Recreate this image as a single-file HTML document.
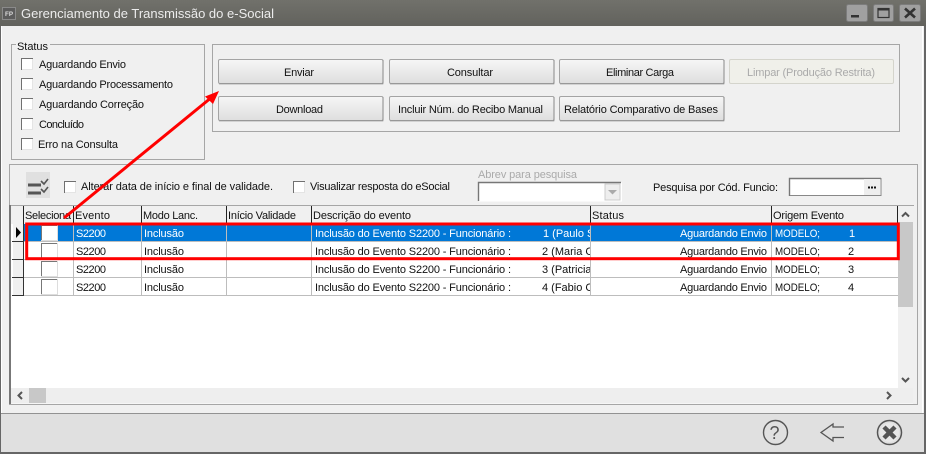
<!DOCTYPE html>
<html><head><meta charset="utf-8"><title>Gerenciamento de Transmissão do e-Social</title>
<style>
html,body{margin:0;padding:0;width:926px;height:454px;overflow:hidden;background:#666}
svg{display:block;position:absolute;left:0;top:0}
text{font-family:"Liberation Sans",sans-serif;font-size:11px;fill:#111;white-space:pre}
.t{font-size:13px;fill:#ececec}
.g{fill:#aaa}
.w{fill:#fff}
.m{font-size:11px}
</style></head><body>
<svg width="926" height="454" viewBox="0 0 926 454" xmlns="http://www.w3.org/2000/svg">
<defs>
<linearGradient id="tb" x1="0" y1="0" x2="0" y2="1"><stop offset="0" stop-color="#71716b"/><stop offset="1" stop-color="#62625d"/></linearGradient>
<linearGradient id="bt" x1="0" y1="0" x2="0" y2="1"><stop offset="0" stop-color="#f6f6f6"/><stop offset="1" stop-color="#dedede"/></linearGradient>
<g id="btn"><rect x="0.5" y="0.5" width="164.5" height="24" rx="1.5" fill="url(#bt)" stroke="#a4a4a4"/><path d="M1 25H165V1" fill="none" stroke="#777" stroke-width="0.6"/></g>
<g id="cb"><rect x="0.5" y="0.5" width="11" height="11" fill="#fff" stroke="#e4e4e4"/><path d="M0.5 12V0.5H12" fill="none" stroke="#707070"/></g>
<g id="cg"><rect x="0" y="0" width="16" height="15" fill="#fff"/><path d="M0.5 15V0.5H16" fill="none" stroke="#777"/><path d="M0 15.5H16.5V0" fill="none" stroke="#ddd"/></g>
<g id="ind"><rect x="0" y="0" width="12" height="17" fill="#f0f0f0"/><path d="M0 17.5H12M11.5 0V18" stroke="#333" fill="none"/><path d="M0.5 0V17" stroke="#fff"/></g>
</defs>

<!-- window -->
<rect x="0" y="0" width="926" height="454" fill="#666"/>
<rect x="1" y="26" width="923" height="426" fill="#f0f0f0"/>
<rect x="1" y="26" width="1" height="387" fill="#fff"/>
<rect x="922" y="26" width="1" height="387" fill="#fff"/>
<rect x="0" y="0" width="926" height="26" fill="url(#tb)"/>
<rect x="1" y="413" width="923" height="1" fill="#929292"/>
<rect x="1" y="414" width="923" height="38" fill="#e0e0e0"/>

<!-- title -->
<rect x="2.5" y="7.5" width="13" height="12" fill="#5c5c5c" stroke="#8a8a8a"/>
<text x="5" y="16" style="font-size:6.5px;font-weight:bold;fill:#ddd" textLength="8" lengthAdjust="spacingAndGlyphs">FP</text>
<text class="t" x="21" y="18" textLength="253" lengthAdjust="spacingAndGlyphs">Gerenciamento de Transmissão do e-Social</text>
<g fill="#a0a0a0" stroke="#7c7c7c">
<rect x="846.5" y="4.5" width="21" height="17" rx="2"/>
<rect x="873.5" y="4.5" width="20" height="17" rx="2"/>
<rect x="899.5" y="4.5" width="21" height="17" rx="2"/>
</g>
<rect x="851" y="15" width="8" height="2.5" fill="#333"/>
<rect x="878" y="8.5" width="11" height="9" fill="none" stroke="#333" stroke-width="1.2"/><rect x="878" y="8" width="11" height="2.5" fill="#333"/>
<path d="M905 8.5L915 17.5M915 8.5L905 17.5" stroke="#333" stroke-width="2.6"/>

<!-- status group -->
<rect x="11.5" y="44.5" width="193" height="115" fill="none" stroke="#a6a6a6"/>
<rect x="16" y="42" width="34" height="6" fill="#f0f0f0"/>
<text x="17" y="50" textLength="31">Status</text>
<use href="#cb" x="21" y="58"/><text x="39" y="68" textLength="87">Aguardando Envio</text>
<use href="#cb" x="21" y="78"/><text x="39" y="88" textLength="134">Aguardando Processamento</text>
<use href="#cb" x="21" y="98"/><text x="39" y="108" textLength="105">Aguardando Correção</text>
<use href="#cb" x="21" y="118"/><text x="39" y="128" textLength="45">Concluído</text>
<use href="#cb" x="21" y="138"/><text x="38" y="148" textLength="80">Erro na Consulta</text>

<!-- button group -->
<rect x="212.5" y="44.5" width="687" height="87" fill="none" stroke="#a6a6a6"/>
<use href="#btn" x="218" y="59"/><text x="284" y="76" textLength="30">Enviar</text>
<use href="#btn" x="389" y="59"/><text x="447" y="76" textLength="46">Consultar</text>
<use href="#btn" x="559" y="59"/><text x="606" y="76" textLength="68">Eliminar Carga</text>
<rect x="729.5" y="59.5" width="164" height="24" rx="1.5" fill="#f0f0ea" stroke="#d4d4cc"/>
<text class="g" x="747" y="76" textLength="128">Limpar (Produção Restrita)</text>
<use href="#btn" x="218" y="96"/><text x="276" y="113" textLength="47">Download</text>
<use href="#btn" x="389" y="96"/><text x="398" y="113" textLength="145">Incluir Núm. do Recibo Manual</text>
<use href="#btn" x="559" y="96"/><text x="564" y="113" textLength="154">Relatório Comparativo de Bases</text>

<!-- lower panel -->
<rect x="9.5" y="164.5" width="908" height="240" fill="none" stroke="#a6a6a6"/>
<rect x="26" y="172" width="24" height="26" fill="#e0e0e0"/>
<path d="M28 185H41M28 193H41" stroke="#555" stroke-width="3"/>
<path d="M41 181L44 184L48 179M41 189L44 192L48 187" stroke="#555" stroke-width="1.6" fill="none"/>
<use href="#cb" x="64" y="181"/><text x="81" y="190" textLength="192">Alterar data de início e final de validade.</text>
<use href="#cb" x="293" y="181"/><text x="310" y="190" textLength="140">Visualizar resposta do eSocial</text>
<text x="478" y="178" class="g" textLength="99">Abrev para pesquisa</text>
<rect x="479" y="182.5" width="143" height="19" fill="#fff"/>
<path d="M478.5 201V182.5H621" fill="none" stroke="#777" stroke-width="1.4"/>
<rect x="605" y="184" width="15" height="16" fill="#eee" stroke="#ccc"/><path d="M608 190H617L612.5 194.5Z" fill="#aaa"/>
<text x="653" y="191" textLength="125">Pesquisa por Cód. Funcio:</text>
<rect x="789" y="178" width="92" height="18" fill="#fff"/>
<path d="M789.5 196V178.5H881" fill="none" stroke="#777" stroke-width="1.4"/>
<path d="M790 195.5H881V178" fill="none" stroke="#888"/>
<rect x="864" y="179" width="16" height="16" fill="#eee"/>
<path d="M868 187.5h2M871 187.5h2M874 187.5h2" stroke="#111" stroke-width="2"/>

<!-- grid -->
<rect x="11" y="205" width="902" height="199" fill="#fff"/>
<rect x="9" y="205" width="2" height="199" fill="#777"/>
<rect x="11" y="205" width="903" height="1" fill="#a6a6a6"/>
<rect x="11" y="206" width="887" height="18" fill="#f0f0f0"/>
<path d="M23.5 206V224M73.5 206V224M141.5 206V224M226.5 206V224M311.5 206V224M590.5 206V224M771.5 206V224M897.5 206V224" stroke="#222"/>
<rect x="23" y="224" width="875" height="18" fill="#0078d7"/>
<path d="M24 241.5H898M24 259.5H898M24 277.5H898M24 295.5H898" stroke="#bdbdbd"/>
<path d="M73.5 224V296M141.5 224V296M226.5 224V296M311.5 224V296M590.5 224V296M771.5 224V296" stroke="#bdbdbd"/>
<use href="#ind" x="12" y="224"/><use href="#ind" x="12" y="242"/><use href="#ind" x="12" y="260"/><use href="#ind" x="12" y="278"/>
<path d="M16 227L21 232.5L16 238Z" fill="#000"/>
<use href="#cg" x="41" y="225"/><use href="#cg" x="41" y="243"/><use href="#cg" x="41" y="261"/><use href="#cg" x="41" y="279"/>

<text x="25" y="219" textLength="46">Seleciona</text>
<text x="75" y="219" textLength="35">Evento</text>
<text x="143" y="219" textLength="55">Modo Lanc.</text>
<text x="228" y="219" textLength="68">Início Validade</text>
<text x="313" y="219" textLength="98">Descrição do evento</text>
<text x="592" y="219" textLength="32">Status</text>
<text x="773" y="219" textLength="71">Origem Evento</text>

<text class="w" x="76" y="237" textLength="30">S2200</text><text class="w" x="144" y="237" textLength="40">Inclusão</text><text class="w" x="315" y="237" textLength="196">Inclusão do Evento S2200 - Funcionário :</text>
<svg x="543" y="225" width="47" height="16"><text class="w" x="0" y="12">1 (Paulo Santos</text></svg>
<text class="w" x="680" y="237" textLength="87">Aguardando Envio</text><text class="w m" x="775" y="237" textLength="45" lengthAdjust="spacingAndGlyphs">MODELO;</text><text class="w" x="849" y="237">1</text>

<text x="76" y="255" textLength="30">S2200</text><text x="144" y="255" textLength="40">Inclusão</text><text x="315" y="255" textLength="196">Inclusão do Evento S2200 - Funcionário :</text>
<svg x="542" y="243" width="48" height="16"><text x="0" y="12">2 (Maria Costa</text></svg>
<text x="680" y="255" textLength="87">Aguardando Envio</text><text class="m" x="775" y="255" textLength="45" lengthAdjust="spacingAndGlyphs">MODELO;</text><text x="848" y="255">2</text>

<text x="76" y="273" textLength="30">S2200</text><text x="144" y="273" textLength="40">Inclusão</text><text x="315" y="273" textLength="196">Inclusão do Evento S2200 - Funcionário :</text>
<svg x="542" y="261" width="48" height="16"><text x="0" y="12">3 (Patricia Lima</text></svg>
<text x="680" y="273" textLength="87">Aguardando Envio</text><text class="m" x="775" y="273" textLength="45" lengthAdjust="spacingAndGlyphs">MODELO;</text><text x="848" y="273">3</text>

<text x="76" y="291" textLength="30">S2200</text><text x="144" y="291" textLength="40">Inclusão</text><text x="315" y="291" textLength="196">Inclusão do Evento S2200 - Funcionário :</text>
<svg x="542" y="279" width="48" height="16"><text x="0" y="12">4 (Fabio Costa</text></svg>
<text x="680" y="291" textLength="87">Aguardando Envio</text><text class="m" x="775" y="291" textLength="45" lengthAdjust="spacingAndGlyphs">MODELO;</text><text x="848" y="291">4</text>

<!-- scrollbars -->
<rect x="898" y="206" width="15" height="182" fill="#f0f0f0"/>
<rect x="898" y="222" width="15" height="85" fill="#c8c8c8"/>
<path d="M902 216.5L905.5 213L909 216.5" fill="none" stroke="#555" stroke-width="2"/>
<path d="M902 378L905.5 381.5L909 378" fill="none" stroke="#555" stroke-width="2"/>
<rect x="11" y="388" width="902" height="15.5" fill="#eee"/>
<rect x="29" y="388" width="17" height="15" fill="#c8c8c8"/>
<path d="M22 392L18.5 395.5L22 399" fill="none" stroke="#555" stroke-width="2"/>
<path d="M887 392L890.5 395.5L887 399" fill="none" stroke="#555" stroke-width="2"/>

<!-- footer icons -->
<circle cx="775.5" cy="432.5" r="12" fill="none" stroke="#555" stroke-width="1.4"/>
<text x="769.5" y="439" style="font-size:18px;fill:#555">?</text>
<path d="M844 427H833V424L821 432.5L833 441V437.5H844" fill="none" stroke="#555" stroke-width="1.3"/>
<circle cx="889.5" cy="432.5" r="12" fill="none" stroke="#555" stroke-width="1.5"/>
<circle cx="889.5" cy="432.5" r="9.5" fill="#e8e8e8"/>
<path d="M884 427L895 438M895 427L884 438" stroke="#555" stroke-width="4.4"/>

<!-- annotations -->
<rect x="26.7" y="224" width="871.6" height="34.7" fill="none" stroke="#f00" stroke-width="3"/>
<path d="M64 218L212 97" stroke="#f00" stroke-width="3"/>
<path d="M219 91L205 96.5L213 104Z" fill="#f00"/>
</svg>
</body></html>
